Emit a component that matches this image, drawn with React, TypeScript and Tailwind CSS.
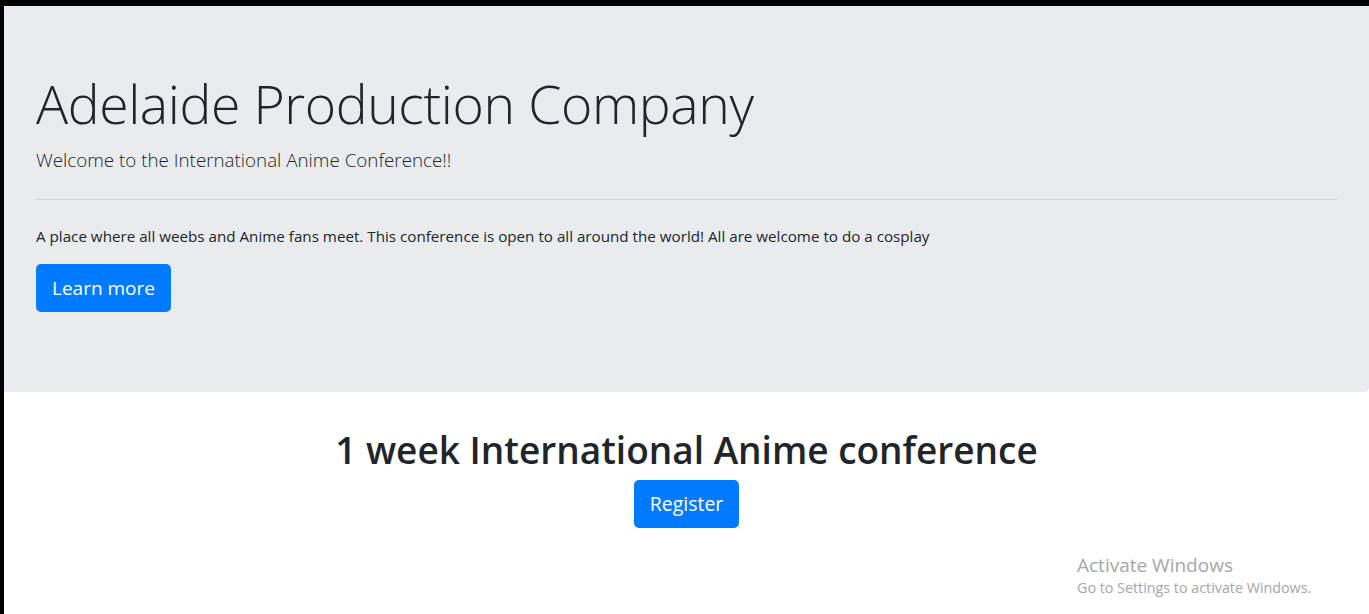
export default function App() {
  return (
    <div
      className="relative min-h-[614px] bg-black pt-[6px] pl-[4px] text-[#212529]"
      style={{ fontFamily: '"Open Sans", "Liberation Sans", sans-serif' }}
    >
      <div className="min-h-[608px] bg-white">
        <div className="bg-[#e9ecef] rounded-br-[5px] px-8 pt-16 pb-16">
          <h1 className="text-[53.5px] tracking-[-0.4px] font-light leading-[67px] mb-2">Adelaide Production Company</h1>
          <p className="text-[18.8px] font-light leading-[30px]">Welcome to the International Anime Conference!!</p>
          <hr className="my-6 border-t border-black/10" />
          <p className="text-[15.2px] leading-[24px] mb-4">
            A place where all weebs and Anime fans meet. This conference is open to all around the world! All are
            welcome to do a cosplay
          </p>
          <p className="mb-4">
            <a
              href="#"
              className="inline-block bg-[#007bff] text-white text-[19px] leading-[32px] px-4 py-2 rounded-[5px]"
            >
              Learn more
            </a>
          </p>
        </div>
        <div className="flex flex-col items-center pt-[34px]">
          <h1 className="text-[37px] font-semibold leading-[48px] mb-[6px]">1 week International Anime conference</h1>
          <button className="bg-[#007bff] text-white text-[19.5px] leading-[32px] px-4 py-2 rounded-[5px]">
            Register
          </button>
        </div>
      </div>
      <div className="absolute left-[1077px] top-[552px] text-[#a6a6a6]">
        <div className="text-[19px] leading-[26px]">Activate Windows</div>
        <div className="text-[14.3px] leading-[20px]">Go to Settings to activate Windows.</div>
      </div>
    </div>
  );
}
